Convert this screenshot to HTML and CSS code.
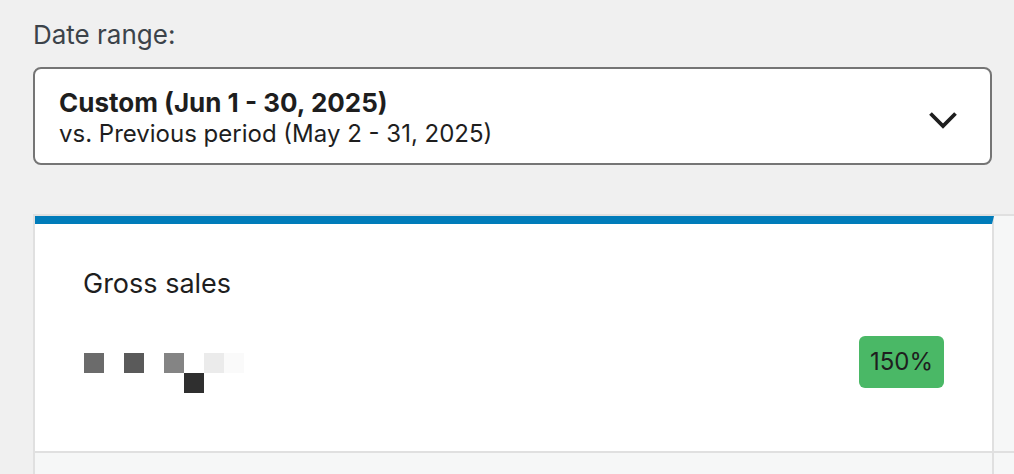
FILE: index.html
```html
<!DOCTYPE html>
<html lang="en">
<head>
<meta charset="utf-8">
<title>Date range</title>
<link rel="stylesheet" href="styles.css">
</head>
<body>
<div class="page">
  <div class="filter">
    <div class="filter-label">Date range:</div>
    <button class="dropdown" type="button">
      <span class="dropdown-text">
        <span class="dropdown-primary">Custom (Jun 1 - 30, 2025)</span>
        <span class="dropdown-secondary">vs. Previous period (May 2 - 31, 2025)</span>
      </span>
      <svg class="chevron" width="30" height="18" viewBox="0 0 30 18" aria-hidden="true">
        <polyline points="2.5,2.5 15,15 27.5,2.5" fill="none" stroke="#1e1e1e" stroke-width="3.8" stroke-linejoin="miter" />
      </svg>
    </button>
  </div>

  <div class="summary">
    <div class="summary-item is-selected">
      <div class="summary-label">Gross sales</div>
      <div class="summary-data">
        <div class="masked-value" aria-label="hidden value">
          <span class="px px-a"></span>
          <span class="px px-b"></span>
          <span class="px px-c"></span>
          <span class="px px-d"></span>
          <span class="px px-e"></span>
          <span class="px px-f"></span>
        </div>
        <span class="delta">150%</span>
      </div>
    </div>
    <div class="summary-item"></div>
    <div class="summary-item is-row2"></div>
    <div class="summary-item is-row2"></div>
  </div>
</div>
</body>
</html>
```

FILE: styles.css
```css
html, body {
  margin: 0;
  padding: 0;
}

body {
  background: #f0f0f0;
  font-family: Inter, "Noto Sans", "Liberation Sans", sans-serif;
  color: #1e1e1e;
  overflow: hidden;
}

.page {
  padding: 17px 0 0 33px;
}

.filter {
  width: 959px;
}

.filter-label {
  font-size: 26px;
  line-height: 36px;
  color: #3c434a;
  margin-bottom: 14px;
}

.dropdown {
  display: flex;
  align-items: center;
  justify-content: space-between;
  box-sizing: border-box;
  width: 959px;
  height: 98px;
  padding: 17px 32px 14px 24px;
  background: #ffffff;
  border: 2px solid #757575;
  border-radius: 8px;
  font-family: inherit;
  color: #1e1e1e;
  text-align: left;
  cursor: pointer;
}

.dropdown-text {
  display: flex;
  flex-direction: column;
}

.dropdown-primary {
  font-size: 26px;
  line-height: 31px;
  font-weight: 700;
}

.dropdown-secondary {
  font-size: 24px;
  line-height: 31px;
  font-weight: 400;
}

.chevron {
  display: block;
  margin-top: 5px;
}

.summary {
  margin-top: 49px;
  display: grid;
  grid-template-columns: 959px 200px;
  grid-template-rows: 237px 100px;
  border-top: 2px solid #e0e0e0;
  border-left: 2px solid #e0e0e0;
}

.summary-item {
  box-sizing: border-box;
  background: #f6f7f7;
  border-right: 2px solid #e0e0e0;
  border-bottom: 2px solid #e0e0e0;
}

.summary-item.is-selected {
  background: #ffffff;
  border-top: 8px solid #007cba;
  padding: 42px 48px 0 48px;
}

.summary-label {
  font-size: 27px;
  line-height: 36px;
  color: #1e1e1e;
}

.summary-data {
  margin-top: 34px;
  display: flex;
  justify-content: space-between;
  align-items: flex-start;
}

.masked-value {
  display: grid;
  grid-template-columns: repeat(8, 20px);
  grid-template-rows: 20px 20px;
  margin-top: 17px;
  margin-left: 1px;
}

.px { display: block; }
.px-a { grid-column: 1; grid-row: 1; background: #6b6b6b; }
.px-b { grid-column: 3; grid-row: 1; background: #5a5a5a; }
.px-c { grid-column: 5; grid-row: 1; background: #848484; }
.px-d { grid-column: 6; grid-row: 2; background: #2f2f2f; }
.px-e { grid-column: 7; grid-row: 1; background: #ebebeb; }
.px-f { grid-column: 8; grid-row: 1; background: #fafafa; }

.delta {
  display: inline-block;
  box-sizing: border-box;
  height: 52px;
  padding: 0 11px;
  background: #4ab866;
  border-radius: 6px;
  font-size: 24px;
  line-height: 52px;
  color: #1e1e1e;
}
```
